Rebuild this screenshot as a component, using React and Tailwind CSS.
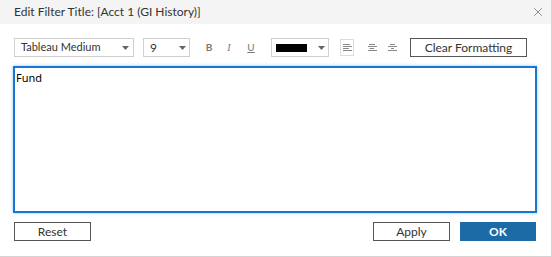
import { X } from 'lucide-react'

function Caret() {
  return (
    <svg width="7" height="4" viewBox="0 0 7 4" className="shrink-0">
      <path d="M0 0 L7 0 L3.5 4 Z" fill="#666" />
    </svg>
  )
}

function AlignIcon({ type }) {
  const lines = type === 'left'
    ? [[0, 7], [0, 9], [0, 6], [0, 9]]
    : type === 'center'
      ? [[1, 7], [0, 9], [1.5, 6], [0, 9]]
      : [[2, 7], [0, 9], [3, 6], [0, 9]]
  return (
    <svg width="9" height="8" viewBox="0 0 9 8">
      {lines.map(([x, w], i) => (
        <rect key={i} x={x} y={i * 2} width={w - x > 0 ? w - x : w} height="1" fill="#888" />
      ))}
    </svg>
  )
}

export default function App() {
  return (
    <div className="w-[552px] h-[257px] bg-white border-r border-b border-[#d4d4d4] text-[#333] overflow-hidden"
      style={{ fontFamily: 'Lato, "Noto Sans", sans-serif' }}>

      {/* HEADER */}
      <div className="h-[24px] bg-[#f4f4f4] flex items-center justify-between pl-[14px] pr-[6px]">
        <span className="text-[12px]">Edit Filter Title: [Acct 1 (GI History)]</span>
        <X size={14} strokeWidth={1.2} color="#666" />
      </div>

      {/* TOOLBAR */}
      <div className="flex items-center h-[19px] mt-[14px] pl-[14px] text-[11px]">
        <div className="w-[120px] h-[19px] border border-[#cfcfcf] flex items-center justify-between pl-[6px] pr-[4px]">
          <span>Tableau Medium</span>
          <Caret />
        </div>
        <div className="w-[47px] h-[19px] border border-[#cfcfcf] flex items-center justify-between pl-[6px] pr-[3px] ml-[9px]">
          <span className="text-[12px]">9</span>
          <Caret />
        </div>
        <span className="ml-[14px] w-[10px] text-center font-bold text-[10px] text-[#777]">B</span>
        <span className="ml-[10px] w-[10px] text-center italic text-[10px] text-[#777]" style={{ fontFamily: '"Liberation Serif", serif' }}>I</span>
        <span className="ml-[12px] w-[10px] text-center underline text-[10px] text-[#777]">U</span>
        <div className="w-[58px] h-[19px] border border-[#cfcfcf] flex items-center justify-between pl-[4px] pr-[3px] ml-[15px]">
          <div className="w-[31px] h-[8px] bg-black" />
          <Caret />
        </div>
        <div className="ml-[11px] w-[14px] h-[17px] border border-[#dcdcdc] flex items-center justify-center">
          <AlignIcon type="left" />
        </div>
        <div className="ml-[11px] w-[14px] flex items-center justify-center">
          <AlignIcon type="center" />
        </div>
        <div className="ml-[6px] w-[14px] flex items-center justify-center">
          <AlignIcon type="right" />
        </div>
        <button className="ml-[11px] w-[117px] h-[19px] border border-[#555] text-[12px] flex items-center justify-center">
          Clear Formatting
        </button>
      </div>

      {/* TEXT AREA */}
      <div className="mt-[9px] ml-[13px] w-[524px] h-[147px] border-2 border-[#1a74d4] shadow-[0_0_3px_#8fc2f5] px-[1px] py-[2px] text-[11px] text-black"
        style={{ fontFamily: '"Noto Sans", sans-serif' }}>
        Fund
      </div>

      {/* FOOTER */}
      <div className="flex items-center mt-[9px] pl-[14px] pr-[15px] text-[12px]">
        <button className="w-[77px] h-[19px] border border-[#555] flex items-center justify-center">Reset</button>
        <div className="flex-1" />
        <button className="w-[77px] h-[19px] border border-[#555] flex items-center justify-center">Apply</button>
        <button className="ml-[10px] w-[76px] h-[19px] bg-[#1c6ba6] text-white font-bold flex items-center justify-center">OK</button>
      </div>
    </div>
  )
}
